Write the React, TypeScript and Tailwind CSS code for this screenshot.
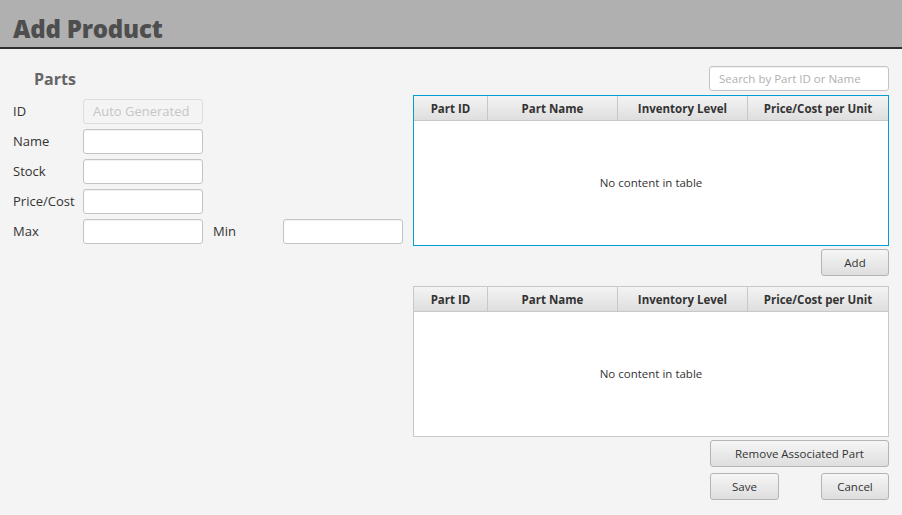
import React from "react";

const font = { fontFamily: '"Open Sans", "Noto Sans", "Liberation Sans", sans-serif' };

function Field({ width = "w-[120px]", placeholder, disabled = false, small = false }: { width?: string; placeholder?: string; disabled?: boolean; small?: boolean }) {
  return (
    <div
      className={`${width} h-[25px] rounded-[3px] border flex items-center px-[9px] whitespace-nowrap overflow-hidden ${small ? "px-[7px] text-[11.5px]" : "text-[13px]"} ${
        disabled ? "border-[#dcdcdc] bg-[#f4f4f4] text-[#c6c6c6]" : "border-[#c4c4c4] bg-white text-[#b0b0b0] shadow-[inset_0_1px_1px_rgba(0,0,0,0.06)]"
      }`}
    >
      {placeholder}
    </div>
  );
}

function Button({ label, width }: { label: string; width: string }) {
  return (
    <div className={`${width} h-[27px] rounded-[3px] border border-[#b4b4b4] bg-gradient-to-b from-[#f6f6f6] to-[#dedede] flex items-center justify-center text-[11.5px] text-[#333]`}>
      {label}
    </div>
  );
}

function Table({ focused = false }: { focused?: boolean }) {
  const cols = [
    { name: "Part ID", w: "w-[74px]" },
    { name: "Part Name", w: "w-[130px]" },
    { name: "Inventory Level", w: "w-[130px]" },
    { name: "Price/Cost per Unit", w: "flex-1" },
  ];
  return (
    <div className={`w-[476px] h-[151px] flex flex-col bg-white border ${focused ? "border-[#039ed3]" : "border-[#c8c8c8]"}`}>
      <div className="h-[25px] flex bg-gradient-to-b from-[#f4f4f4] to-[#dedede] border-b border-[#c8c8c8]">
        {cols.map((c, i) => (
          <div
            key={c.name}
            className={`${c.w} flex items-center justify-center pt-[2px] text-[11.5px] font-bold text-[#333] ${i < 3 ? "border-r border-[#c8c8c8]" : ""}`}
          >
            {c.name}
          </div>
        ))}
      </div>
      <div className="flex-1 flex items-center justify-center text-[11.5px] text-[#333]">No content in table</div>
    </div>
  );
}

export default function App() {
  const rows = ["Name", "Stock", "Price/Cost"];
  return (
    <div className="w-[902px] h-[515px] bg-[#f4f4f4] overflow-hidden" style={font}>
      <div className="h-[49px] bg-[#b0b0b0] border-b-2 border-[#2e2e2e] flex items-end pl-[13px] pb-[1px]">
        <span className="text-[24px] font-extrabold text-[#4e4e4e] tracking-[-0.2px] leading-[34px]">Add Product</span>
      </div>

      <div className="flex">
        <div className="w-[413px] pl-[13px]">
          <div className="mt-[18px] ml-[21px] text-[16px] font-bold text-[#666] leading-[24px]">Parts</div>
          <div className="mt-[8px] flex flex-col gap-[5px] text-[13px] text-[#333]">
            <div className="flex items-center">
              <span className="w-[70px]">ID</span>
              <Field placeholder="Auto Generated" disabled />
            </div>
            {rows.map((r) => (
              <div key={r} className="flex items-center">
                <span className="w-[70px]">{r}</span>
                <Field />
              </div>
            ))}
            <div className="flex items-center">
              <span className="w-[70px]">Max</span>
              <Field />
              <span className="ml-[10px] w-[70px]">Min</span>
              <Field />
            </div>
          </div>
        </div>

        <div className="w-[476px] flex flex-col items-end">
          <div className="mt-[17px]">
            <Field width="w-[180px]" placeholder="Search by Part ID or Name" small />
          </div>
          <div className="mt-[4px]">
            <Table focused />
          </div>
          <div className="mt-[3px]">
            <Button label="Add" width="w-[68px]" />
          </div>
          <div className="mt-[10px]">
            <Table />
          </div>
          <div className="mt-[3px]">
            <Button label="Remove Associated Part" width="w-[179px]" />
          </div>
          <div className="mt-[6px] w-[179px] flex justify-between">
            <Button label="Save" width="w-[69px]" />
            <Button label="Cancel" width="w-[68px]" />
          </div>
        </div>
      </div>
    </div>
  );
}
